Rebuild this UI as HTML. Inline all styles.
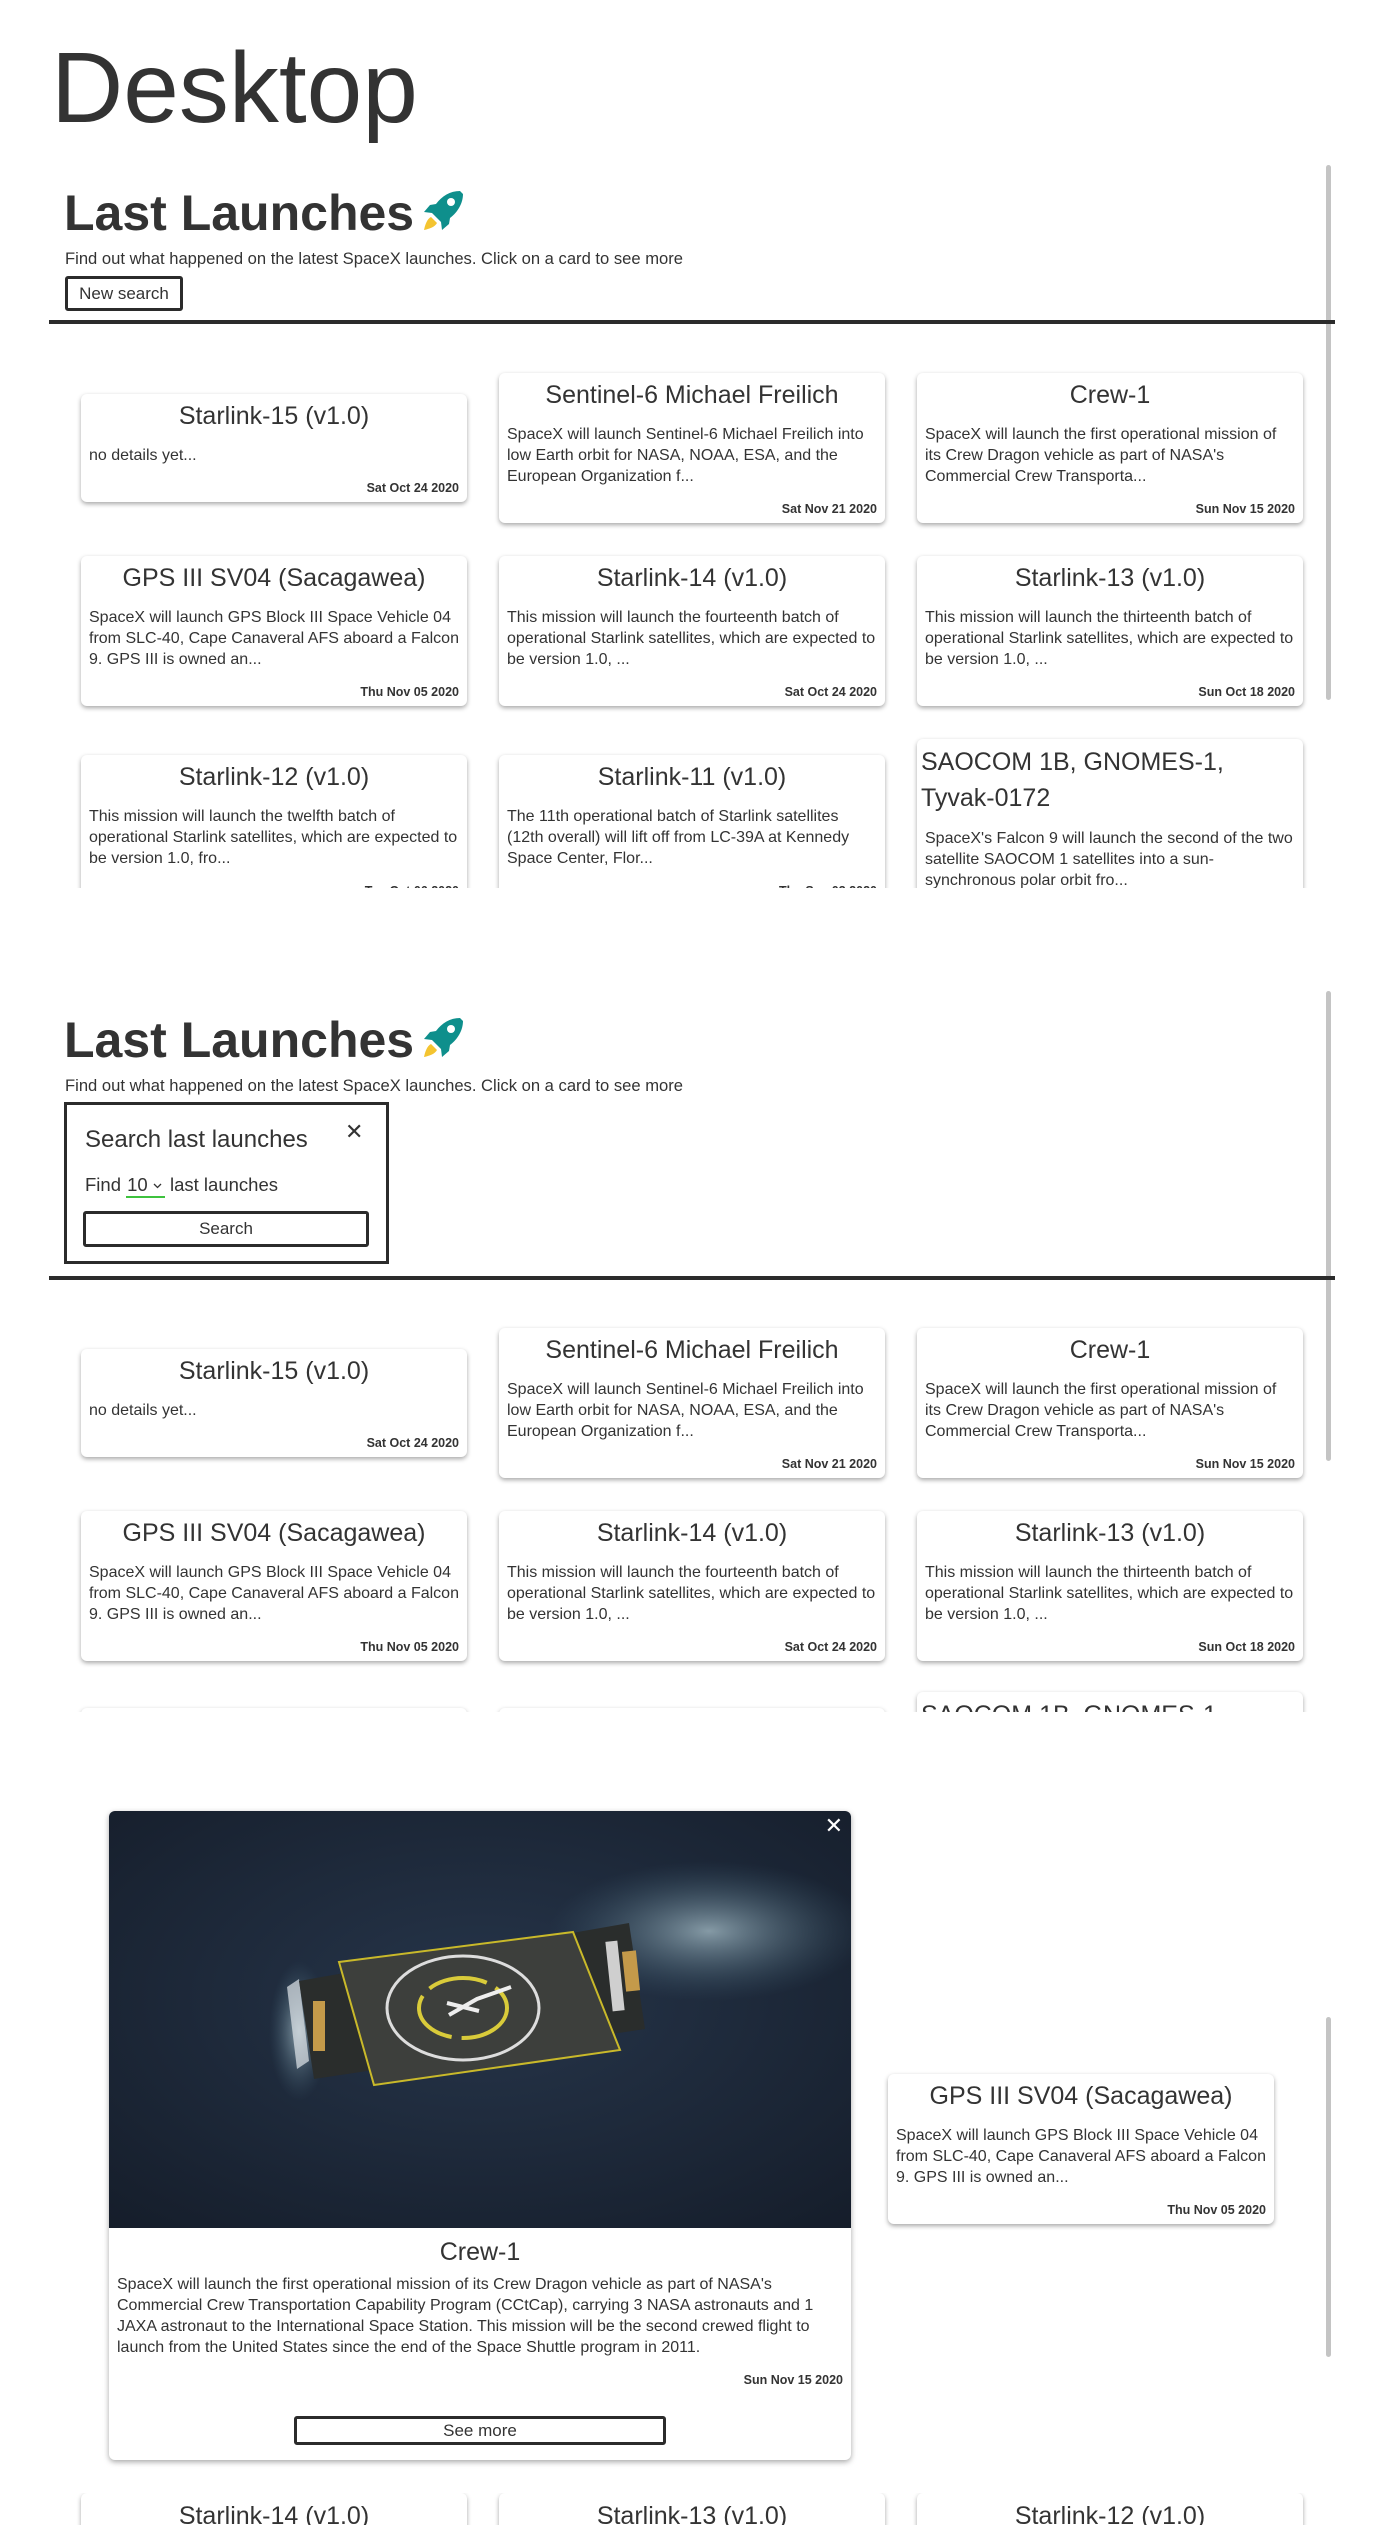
<!DOCTYPE html>
<html><head><meta charset="utf-8">
<style>
*{box-sizing:border-box;margin:0;padding:0}
body{width:1377px;height:2525px;background:#fff;color:#333;font-family:"Liberation Sans",sans-serif;position:relative;overflow:hidden}
.abs{position:absolute}
h1.desk{position:absolute;left:51px;top:28px;font-size:100px;font-weight:400;line-height:120px;color:#333}
.h2{position:absolute;left:64px;font-size:50px;font-weight:700;line-height:60px;color:#333;white-space:nowrap}
.h2 svg{vertical-align:-4px;margin-left:6px}
.sub{position:absolute;left:65px;font-size:16.6px;line-height:20px;white-space:nowrap}
.line{position:absolute;left:49px;width:1286px;height:4px;background:#2b2b2b}
.sb{position:absolute;left:1326px;width:5px;background:#c4c4c4;border-radius:3px}
.btn{position:absolute;border:3px solid #2b2b2b;border-radius:3px;font-size:17px;text-align:center;background:#fff}
.card{position:absolute;width:386px;background:#fff;border-radius:6px;box-shadow:0 2px 5px rgba(0,0,0,.35);padding:5px 8px 6px;overflow:hidden}
.card .t{font-size:25px;line-height:34px;text-align:center;white-space:nowrap}
.card .t.l{text-align:left;line-height:36px}
.card .b{font-size:16px;line-height:21px;margin-top:12px;height:63px;overflow:hidden}
.card .b1{height:21px}
.card .d{font-size:12.5px;font-weight:700;text-align:right;line-height:16px;margin-top:14px}
.clip{position:absolute;left:0;width:1377px;overflow:hidden}
</style></head><body>
<h1 class="desk">Desktop</h1>

<!-- section 1 -->
<div class="sb" style="top:165px;height:535px"></div>
<div class="h2" style="top:183px">Last Launches<svg width="46" height="46" viewBox="0 0 46 46"><path d="M40 3 C30 3 22 8 16 16 L10 17 L4 24 L12 25 L21 34 L22 42 L29 36 L30 30 C38 24 43 15 43 6 Z" fill="#0e8f8c"/><circle cx="31" cy="14" r="4" fill="#fff"/><path d="M11 29 C7 31 5 37 4 42 C9 41 15 39 17 35 Z" fill="#f4c430"/></svg></div>
<div class="sub" style="top:249px">Find out what happened on the latest SpaceX launches. Click on a card to see more</div>
<div class="btn" style="left:65px;top:276px;width:118px;height:35px;line-height:29px">New search</div>
<div class="line" style="top:320px"></div>

<div class="clip" style="top:330px;height:558px">
 <div class="card" style="left:81px;top:64px;height:108px"><div class="t">Starlink-15 (v1.0)</div><div class="b b1">no details yet...</div><div class="d">Sat Oct 24 2020</div></div>
 <div class="card" style="left:499px;top:43px;height:150px"><div class="t">Sentinel-6 Michael Freilich</div><div class="b">SpaceX will launch Sentinel-6 Michael Freilich into low Earth orbit for NASA, NOAA, ESA, and the European Organization f...</div><div class="d">Sat Nov 21 2020</div></div>
 <div class="card" style="left:917px;top:43px;height:150px"><div class="t">Crew-1</div><div class="b">SpaceX will launch the first operational mission of its Crew Dragon vehicle as part of NASA's Commercial Crew Transporta...</div><div class="d">Sun Nov 15 2020</div></div>
 <div class="card" style="left:81px;top:226px;height:150px"><div class="t">GPS III SV04 (Sacagawea)</div><div class="b">SpaceX will launch GPS Block III Space Vehicle 04 from SLC-40, Cape Canaveral AFS aboard a Falcon 9. GPS III is owned an...</div><div class="d">Thu Nov 05 2020</div></div>
 <div class="card" style="left:499px;top:226px;height:150px"><div class="t">Starlink-14 (v1.0)</div><div class="b">This mission will launch the fourteenth batch of operational Starlink satellites, which are expected to be version 1.0, ...</div><div class="d">Sat Oct 24 2020</div></div>
 <div class="card" style="left:917px;top:226px;height:150px"><div class="t">Starlink-13 (v1.0)</div><div class="b">This mission will launch the thirteenth batch of operational Starlink satellites, which are expected to be version 1.0, ...</div><div class="d">Sun Oct 18 2020</div></div>
 <div class="card" style="left:81px;top:425px;height:150px"><div class="t">Starlink-12 (v1.0)</div><div class="b">This mission will launch the twelfth batch of operational Starlink satellites, which are expected to be version 1.0, fro...</div><div class="d">Tue Oct 06 2020</div></div>
 <div class="card" style="left:499px;top:425px;height:150px"><div class="t">Starlink-11 (v1.0)</div><div class="b">The 11th operational batch of Starlink satellites (12th overall) will lift off from LC-39A at Kennedy Space Center, Flor...</div><div class="d">Thu Sep 03 2020</div></div>
 <div class="card" style="left:917px;top:409px;height:200px;padding-left:4px"><div class="t l">SAOCOM 1B, GNOMES-1,<br>Tyvak-0172</div><div class="b" style="padding-left:4px">SpaceX's Falcon 9 will launch the second of the two satellite SAOCOM 1 satellites into a sun-synchronous polar orbit fro...</div><div class="d">Sun Aug 30 2020</div></div>
</div>

<!-- section 2 -->
<div class="sb" style="top:991px;height:470px"></div>
<div class="h2" style="top:1010px">Last Launches<svg width="46" height="46" viewBox="0 0 46 46"><path d="M40 3 C30 3 22 8 16 16 L10 17 L4 24 L12 25 L21 34 L22 42 L29 36 L30 30 C38 24 43 15 43 6 Z" fill="#0e8f8c"/><circle cx="31" cy="14" r="4" fill="#fff"/><path d="M11 29 C7 31 5 37 4 42 C9 41 15 39 17 35 Z" fill="#f4c430"/></svg></div>
<div class="sub" style="top:1076px">Find out what happened on the latest SpaceX launches. Click on a card to see more</div>
<div class="abs" style="left:64px;top:1102px;width:325px;height:162px;border:3px solid #2b2b2b;background:#fff">
 <div class="abs" style="left:18px;top:20px;font-size:24px;line-height:30px;white-space:nowrap">Search last launches</div>
 <div class="abs" style="left:278px;top:14px;font-size:22px;line-height:26px">✕</div>
 <div class="abs" style="left:18px;top:68px;font-size:18.5px;line-height:24px;white-space:nowrap">Find <span style="display:inline-block;border-bottom:2px solid #3ec23e;padding:0 3px 0 1px;line-height:22px">10 <svg width="9" height="6" viewBox="0 0 9 6" style="vertical-align:2px"><path d="M1 1 L4.5 4.5 L8 1" stroke="#333" stroke-width="1.3" fill="none"/></svg></span> last launches</div>
 <div class="btn" style="left:16px;top:106px;width:286px;height:36px;line-height:30px">Search</div>
</div>
<div class="line" style="top:1276px"></div>

<div class="clip" style="top:1290px;height:422px">
 <div class="card" style="left:81px;top:59px;height:108px"><div class="t">Starlink-15 (v1.0)</div><div class="b b1">no details yet...</div><div class="d">Sat Oct 24 2020</div></div>
 <div class="card" style="left:499px;top:38px;height:150px"><div class="t">Sentinel-6 Michael Freilich</div><div class="b">SpaceX will launch Sentinel-6 Michael Freilich into low Earth orbit for NASA, NOAA, ESA, and the European Organization f...</div><div class="d">Sat Nov 21 2020</div></div>
 <div class="card" style="left:917px;top:38px;height:150px"><div class="t">Crew-1</div><div class="b">SpaceX will launch the first operational mission of its Crew Dragon vehicle as part of NASA's Commercial Crew Transporta...</div><div class="d">Sun Nov 15 2020</div></div>
 <div class="card" style="left:81px;top:221px;height:150px"><div class="t">GPS III SV04 (Sacagawea)</div><div class="b">SpaceX will launch GPS Block III Space Vehicle 04 from SLC-40, Cape Canaveral AFS aboard a Falcon 9. GPS III is owned an...</div><div class="d">Thu Nov 05 2020</div></div>
 <div class="card" style="left:499px;top:221px;height:150px"><div class="t">Starlink-14 (v1.0)</div><div class="b">This mission will launch the fourteenth batch of operational Starlink satellites, which are expected to be version 1.0, ...</div><div class="d">Sat Oct 24 2020</div></div>
 <div class="card" style="left:917px;top:221px;height:150px"><div class="t">Starlink-13 (v1.0)</div><div class="b">This mission will launch the thirteenth batch of operational Starlink satellites, which are expected to be version 1.0, ...</div><div class="d">Sun Oct 18 2020</div></div>
 <div class="card" style="left:81px;top:418px;height:150px"><div class="t">Starlink-12 (v1.0)</div></div>
 <div class="card" style="left:499px;top:418px;height:150px"><div class="t">Starlink-11 (v1.0)</div></div>
 <div class="card" style="left:917px;top:402px;height:190px;padding-left:4px"><div class="t l">SAOCOM 1B, GNOMES-1,</div></div>
</div>

<!-- section 3 -->
<div class="sb" style="top:2017px;height:340px"></div>
<div class="card" style="left:888px;top:2074px;height:150px"><div class="t">GPS III SV04 (Sacagawea)</div><div class="b">SpaceX will launch GPS Block III Space Vehicle 04 from SLC-40, Cape Canaveral AFS aboard a Falcon 9. GPS III is owned an...</div><div class="d">Thu Nov 05 2020</div></div>

<div class="clip" style="top:2493px;height:32px">
 <div class="card" style="left:81px;top:0;height:150px"><div class="t" style="margin-top:1px">Starlink-14 (v1.0)</div></div>
 <div class="card" style="left:499px;top:0;height:150px"><div class="t" style="margin-top:1px">Starlink-13 (v1.0)</div></div>
 <div class="card" style="left:917px;top:0;height:150px"><div class="t" style="margin-top:1px">Starlink-12 (v1.0)</div></div>
</div>

<div class="abs" style="left:109px;top:1811px;width:742px;height:649px;background:#fff;border-radius:6px;box-shadow:0 2px 6px rgba(0,0,0,.35);overflow:hidden">
 <svg width="742" height="417" viewBox="0 0 742 417" style="display:block">
  <defs>
   <radialGradient id="sea" cx="50%" cy="45%" r="75%"><stop offset="0" stop-color="#26354a"/><stop offset="1" stop-color="#151d2a"/></radialGradient>
   <radialGradient id="foam" cx="50%" cy="50%" r="50%"><stop offset="0" stop-color="#9fb6c0" stop-opacity=".8"/><stop offset="1" stop-color="#3d5d70" stop-opacity="0"/></radialGradient>
  </defs>
  <rect width="742" height="417" fill="url(#sea)"/>
  <ellipse cx="600" cy="120" rx="160" ry="70" fill="url(#foam)"/>
  <ellipse cx="190" cy="220" rx="30" ry="70" fill="url(#foam)"/>
  <path d="M178 176 L190 168 L200 250 L188 258 Z" fill="#dfe6ea" opacity=".7"/>
  <path d="M190 170 L520 112 L536 218 L205 268 Z" fill="#2a2d2c"/>
  <path d="M230 151 L464 121 L511 239 L265 274 Z" fill="#3d3f3c" stroke="#c9b92a" stroke-width="2"/>
  <ellipse cx="354" cy="197" rx="76" ry="52" fill="none" stroke="#ddd" stroke-width="3"/>
  <ellipse cx="354" cy="197" rx="44" ry="30" fill="none" stroke="#d9cb3a" stroke-width="4" stroke-dasharray="60 10"/>
  <path d="M338 192 L370 200 M340 204 L368 188 L402 176" stroke="#eee" stroke-width="4" fill="none"/>
  <rect x="500" y="130" width="12" height="70" fill="#cfcfcf" transform="rotate(-6 506 165)"/>
  <rect x="515" y="140" width="14" height="40" fill="#c49a4a" transform="rotate(-6 522 160)"/>
  <rect x="204" y="190" width="12" height="50" fill="#c49a4a"/>
 </svg>
 <div class="abs" style="right:8px;top:2px;color:#fff;font-size:22px">✕</div>
 <div style="font-size:25px;line-height:34px;text-align:center;margin-top:7px">Crew-1</div>
 <div style="font-size:16px;line-height:21px;padding:0 8px;margin-top:5px">SpaceX will launch the first operational mission of its Crew Dragon vehicle as part of NASA's Commercial Crew Transportation Capability Program (CCtCap), carrying 3 NASA astronauts and 1 JAXA astronaut to the International Space Station. This mission will be the second crewed flight to launch from the United States since the end of the Space Shuttle program in 2011.</div>
 <div style="font-size:12.5px;font-weight:700;text-align:right;padding-right:8px;margin-top:15px">Sun Nov 15 2020</div>
 <div class="btn" style="left:185px;top:605px;width:372px;height:29px;line-height:23px">See more</div>
</div>
</body></html>
